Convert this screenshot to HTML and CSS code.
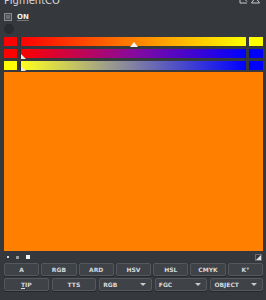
FILE: index.html
```html
<!DOCTYPE html>
<html>
<head>
    <title>PigmentCO</title>
    <link rel="stylesheet" href="styles.css">
</head>
<body>
    <!-- Header -->
    <div class="header">
        <span class="title">PigmentCO</span>
        <div class="win-icons">
            <svg width="9" height="5" viewBox="0 0 9 5"><path d="M1 0.5 H6 M1 0.5 V4 H8 M6 0.5 L8 2.5" stroke="#c8cacc" fill="none" stroke-width="1"/></svg>
            <svg width="9" height="5" viewBox="0 0 9 5"><path d="M0.5 4 L3 0.5 H6 L8.5 4 Z" stroke="#c8cacc" fill="none" stroke-width="1"/></svg>
        </div>
    </div>

    <div class="toggle">
        <span class="check"></span>
        <span class="toggle-label">ON</span>
    </div>
    <div class="dot"></div>

    <!-- Sliders -->
    <div class="sliders">
        <div class="slider-row">
            <div class="swatch" style="background:#ff0000"></div>
            <div class="bar bar-hue">
                <span class="marker" style="left:50%"></span>
            </div>
            <div class="swatch" style="background:#ffff00"></div>
        </div>
        <div class="slider-row">
            <div class="swatch" style="background:#ff0000"></div>
            <div class="bar bar-mix">
                <span class="marker" style="left:0%"></span>
            </div>
            <div class="swatch" style="background:#0000ff"></div>
        </div>
        <div class="slider-row">
            <div class="swatch" style="background:#ffff00"></div>
            <div class="bar bar-grey">
                <span class="marker" style="left:0%"></span>
            </div>
            <div class="swatch" style="background:#0000ff"></div>
        </div>
    </div>

    <!-- Preview -->
    <div class="preview"></div>

    <div class="tools">
        <div class="tool-dots">
            <span class="td td-small"></span>
            <span class="td td-mid"></span>
            <span class="td td-big"></span>
        </div>
        <span class="resize">
            <svg width="5" height="5" viewBox="0 0 5 5"><path d="M5 0 V5 H0 Z" fill="#e0e0e0"/></svg>
        </span>
    </div>

    <!-- Buttons -->
    <div class="btn-row modes">
        <button class="btn">A</button>
        <button class="btn">RGB</button>
        <button class="btn">ARD</button>
        <button class="btn">HSV</button>
        <button class="btn">HSL</button>
        <button class="btn">CMYK</button>
        <button class="btn">K°</button>
    </div>
    <div class="btn-row actions">
        <button class="btn"><u>T</u>IP</button>
        <button class="btn">TTS</button>
        <button class="btn select">RGB<span class="arrow"></span></button>
        <button class="btn select">FGC<span class="arrow"></span></button>
        <button class="btn select">OBJECT<span class="arrow"></span></button>
    </div>
</body>
</html>
```

FILE: styles.css
```css
:root {
    --bg: #35383c;
    --btn: #3f4246;
    --btn-border: #55585c;
    --text: #e4e4e4;
    --orange: #ff8000;
}

* {
    margin: 0;
    padding: 0;
    box-sizing: border-box;
}

body {
    font-family: "DejaVu Sans", sans-serif;
    background-color: var(--bg);
    color: var(--text);
    width: 266px;
    height: 300px;
    overflow: hidden;
    padding: 0 3px 0 4px;
    display: flex;
    flex-direction: column;
}

/* Header */
.header {
    height: 8px;
    display: flex;
    justify-content: space-between;
    overflow: hidden;
}

.title {
    font-size: 10px;
    line-height: 10px;
    margin-top: -4px;
    color: #d8dadc;
}

.win-icons {
    display: flex;
    gap: 3px;
    margin-top: -1px;
    margin-right: 3px;
}

/* Toggle */
.toggle {
    margin-top: 5px;
    height: 8px;
    display: flex;
    align-items: center;
    gap: 5px;
}

.check {
    width: 8px;
    height: 8px;
    border: 1px solid #8a8c8f;
    background-color: #6a6c70;
    box-shadow: inset 0 0 0 1px #4a4c50;
}

.toggle-label {
    font-size: 7px;
    font-weight: bold;
    color: #f0f0f0;
    text-decoration: underline;
    text-decoration-color: #777;
}

.dot {
    margin-top: 3px;
    width: 10px;
    height: 10px;
    border-radius: 50%;
    background-color: #2a2c2f;
}

/* Sliders */
.sliders {
    margin-top: 3px;
    display: flex;
    flex-direction: column;
    gap: 3px;
}

.slider-row {
    display: flex;
    gap: 3px;
    height: 9px;
}

.swatch {
    width: 13px;
    flex-shrink: 0;
}

.slider-row .swatch:last-child {
    width: 14px;
}

.bar {
    flex: 1;
    position: relative;
    border-left: 1px solid #2a2c2e;
}

.bar-hue {
    background: linear-gradient(to right, #ff0000, #ff8000 50%, #ffff00);
}

.bar-mix {
    background: linear-gradient(to right, #ff0000, #880a9e 50%, #0000ff);
}

.bar-grey {
    background: linear-gradient(to right, #ffff20, #9a9a90 40%, #0000ff);
}

.marker {
    position: absolute;
    bottom: -1px;
    width: 0;
    height: 0;
    margin-left: -4px;
    border-left: 4px solid transparent;
    border-right: 4px solid transparent;
    border-bottom: 5px solid #f4f4f4;
}

.bar-mix .marker,
.bar-grey .marker {
    margin-left: 0;
    border-left: 0;
    border-right: 5px solid transparent;
    border-bottom: 5px solid #e8e8e8;
}

/* Preview */
.preview {
    margin-top: 2px;
    height: 179px;
    background-color: var(--orange);
}

/* Tools */
.tools {
    height: 12px;
    display: flex;
    align-items: center;
    justify-content: space-between;
}

.tool-dots {
    display: flex;
    align-items: center;
    gap: 7px;
    padding-left: 3px;
}

.td {
    background-color: #d8d8d8;
}

.td-small { width: 2px; height: 2px; }
.td-mid { width: 3px; height: 3px; background-color: #9a9a9a; }
.td-big { width: 4px; height: 4px; background-color: #f0f0f0; }

.resize {
    width: 7px;
    height: 7px;
    border: 1px solid #6a6c70;
    display: flex;
    align-items: center;
    justify-content: center;
    margin-right: 1px;
}

/* Buttons */
.btn-row {
    display: flex;
    gap: 2px;
}

.modes {
    height: 13px;
}

.actions {
    margin-top: 2px;
    height: 13px;
    gap: 3px;
}

.btn {
    flex: 1;
    font-family: "DejaVu Sans", sans-serif;
    font-size: 6px;
    font-weight: bold;
    color: #d8dadc;
    background-color: var(--btn);
    border: 1px solid var(--btn-border);
    border-radius: 2px;
    box-shadow: 0 1px 0 #26282b;
}

.btn.select {
    display: flex;
    align-items: center;
    justify-content: space-between;
    padding: 0 5px 0 3px;
}

.arrow {
    width: 0;
    height: 0;
    border-left: 3px solid transparent;
    border-right: 3px solid transparent;
    border-top: 3px solid #c8cacc;
}
```
